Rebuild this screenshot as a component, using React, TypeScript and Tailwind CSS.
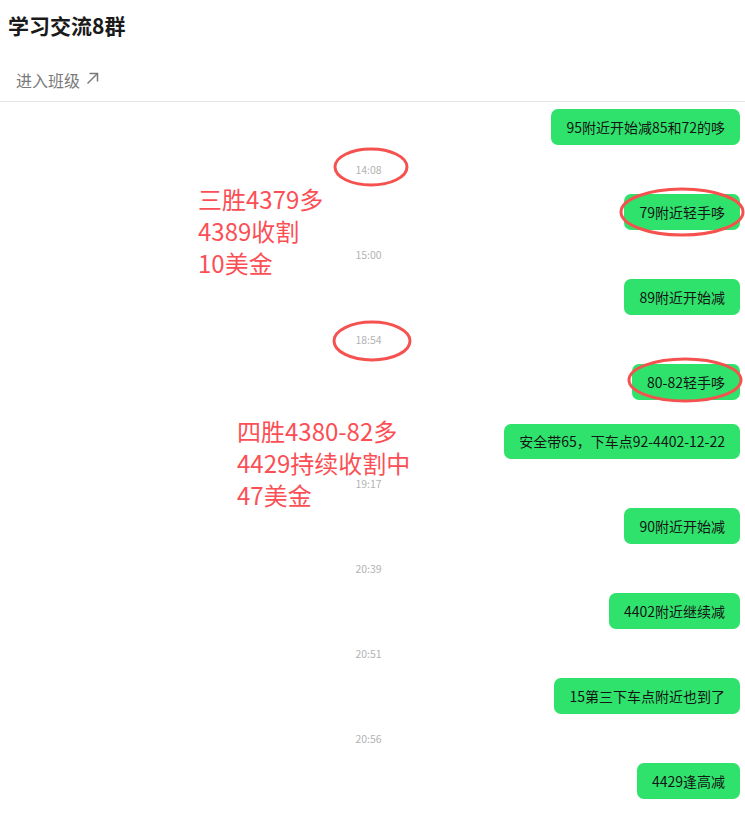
type Item = { kind: 'msg'; text: string; short?: boolean } | { kind: 'time'; text: string };

const items: Item[] = [
  { kind: 'msg', text: '95附近开始减85和72的哆' },
  { kind: 'time', text: '14:08' },
  { kind: 'msg', text: '79附近轻手哆' },
  { kind: 'time', text: '15:00' },
  { kind: 'msg', text: '89附近开始减' },
  { kind: 'time', text: '18:54' },
  { kind: 'msg', text: '80-82轻手哆' },
  { kind: 'msg', text: '安全带65，下车点92-4402-12-22', short: true },
  { kind: 'time', text: '19:17' },
  { kind: 'msg', text: '90附近开始减' },
  { kind: 'time', text: '20:39' },
  { kind: 'msg', text: '4402附近继续减' },
  { kind: 'time', text: '20:51' },
  { kind: 'msg', text: '15第三下车点附近也到了' },
  { kind: 'time', text: '20:56' },
  { kind: 'msg', text: '4429逢高减' },
];

const font = { fontFamily: '"Microsoft YaHei", "Noto Sans CJK SC", "Noto Sans", sans-serif' };

const App = () => {
  return (
    <div className="relative min-h-[814px] w-[745px] bg-white" style={font}>
      <div className="flex h-[52px] items-center px-2 text-[21px] font-bold text-[#1a1a1a]">
        学习交流8群
      </div>
      <div className="flex h-[50px] items-center border-b border-[#e6e6e6] px-4 pt-[6px] text-[16px] text-[#7a7a7a]">
        <span>进入班级</span>
        <svg width="13" height="13" viewBox="0 0 13 13" className="ml-[6px] mb-[2px]" fill="none" stroke="#7a7a7a" strokeWidth="1.5">
          <path d="M1.5 11.5 11.5 1.5" />
          <path d="M3.5 1.5h8v8" />
        </svg>
      </div>

      <div className="-mt-[5px] flex flex-col px-[5px]">
        {items.map((it, i) =>
          it.kind === 'msg' ? (
            <div key={i} className="my-3 flex justify-end">
              <div
                className={`flex ${it.short ? 'h-[35px]' : 'h-9'} items-center rounded-[7px] bg-[#2fe26c] px-[15px] text-[14px] text-[#151515]`}
              >
                {it.text}
              </div>
            </div>
          ) : (
            <div key={i} className="flex h-[25px] items-center justify-center pr-2 text-[10.5px] text-[#b3b3b3]">
              {it.text}
            </div>
          ),
        )}
      </div>

      {/* red annotations drawn over the chat */}
      <svg className="pointer-events-none absolute left-0 top-0" width="745" height="814">
        <g fill="none" stroke="#f5524f" strokeWidth="3">
          <ellipse cx="371" cy="167" rx="36" ry="18" />
          <ellipse cx="682" cy="212" rx="61" ry="23" />
          <ellipse cx="372" cy="341" rx="38" ry="19" />
          <ellipse cx="685" cy="380" rx="56" ry="21" />
        </g>
      </svg>
      <div className="pointer-events-none absolute left-[198px] top-[183px] text-[24px] leading-[32px] text-[#fb4f55]">
        <div>三胜4379多</div>
        <div>4389收割</div>
        <div>10美金</div>
      </div>
      <div className="pointer-events-none absolute left-[237px] top-[415px] text-[24px] leading-[32px] text-[#fb4f55]">
        <div>四胜4380-82多</div>
        <div>4429持续收割中</div>
        <div>47美金</div>
      </div>
    </div>
  );
};

export default App;
